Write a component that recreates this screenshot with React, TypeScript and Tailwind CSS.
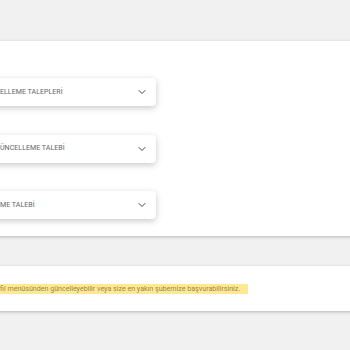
import { ChevronDown } from 'lucide-react'

const items = ['ELLEME TALEPLERİ', 'ÜNCELLEME TALEBİ', 'ME TALEBİ']

export default function App() {
  return (
    <div className="h-[350px] w-[350px] overflow-hidden bg-[#f1f1f1] pt-[41px] font-['Roboto',sans-serif]">
      {/* Requests card */}
      <div className="-ml-[40px] w-[420px] bg-white pt-[37px] pb-[17px] shadow-[0_1px_3px_rgba(0,0,0,0.25)]">
        <div className="flex flex-col gap-[28.5px]">
          {items.map((label) => (
            <div
              key={label}
              className="flex h-[28px] w-[196px] items-center justify-between rounded-[4px] bg-white pl-[40px] pr-[8px] shadow-[0_2px_6px_rgba(0,0,0,0.22)]"
            >
              <span className="whitespace-nowrap text-[7.1px] text-[#666]">{label}</span>
              <ChevronDown className="h-[12px] w-[12px] text-[#444]" strokeWidth={2} />
            </div>
          ))}
        </div>
      </div>

      {/* Info card */}
      <div className="-ml-[40px] mt-[30px] flex h-[45px] w-[420px] items-center bg-white shadow-[0_1px_3px_rgba(0,0,0,0.25)]">
        <span className="ml-[40px] whitespace-nowrap bg-[#fde993] pr-[8px] text-[7.1px] leading-[10px] text-[#9a8847]">
          fil menüsünden güncelleyebilir veya size en yakın şubemize başvurabilirsiniz.
        </span>
      </div>
    </div>
  )
}
